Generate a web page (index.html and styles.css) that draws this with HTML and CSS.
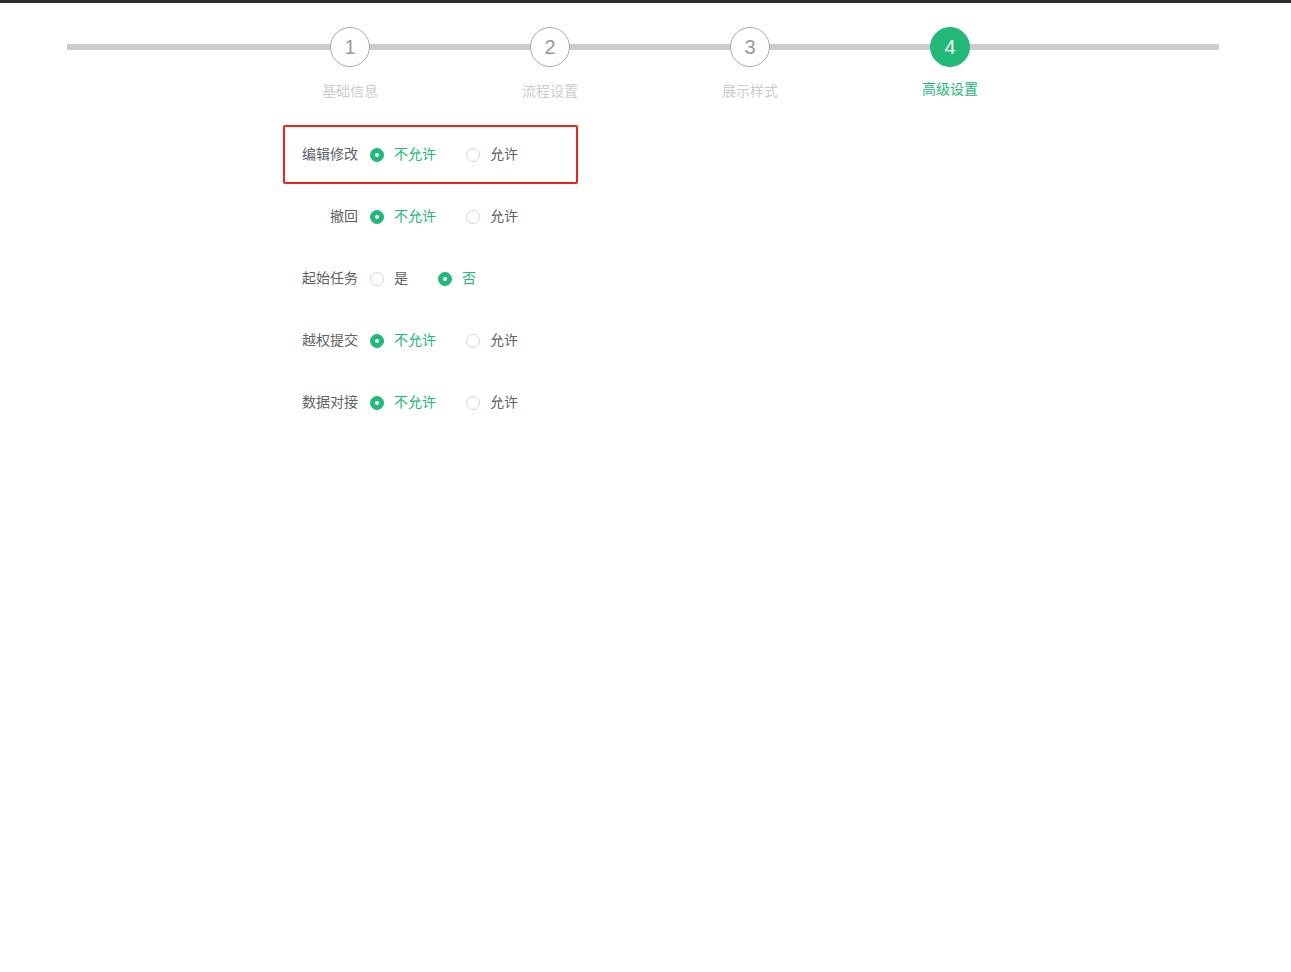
FILE: index.html
```html
<!DOCTYPE html>
<html lang="zh-CN">
<head>
    <meta charset="UTF-8">
    <title>高级设置</title>
    <link rel="stylesheet" href="styles.css">
</head>
<body>
    <div class="topbar"></div>

    <div class="steps">
        <div class="step">
            <div class="step-num">1</div>
            <div class="step-title">基础信息</div>
        </div>
        <div class="step">
            <div class="step-num">2</div>
            <div class="step-title">流程设置</div>
        </div>
        <div class="step">
            <div class="step-num">3</div>
            <div class="step-title">展示样式</div>
        </div>
        <div class="step active">
            <div class="step-num">4</div>
            <div class="step-title">高级设置</div>
        </div>
    </div>

    <form class="form">
        <div class="form-item marked">
            <label class="form-label">编辑修改</label>
            <div class="radios">
                <span class="radio checked"><i></i>不允许</span>
                <span class="radio"><i></i>允许</span>
            </div>
        </div>
        <div class="form-item">
            <label class="form-label">撤回</label>
            <div class="radios">
                <span class="radio checked"><i></i>不允许</span>
                <span class="radio"><i></i>允许</span>
            </div>
        </div>
        <div class="form-item">
            <label class="form-label">起始任务</label>
            <div class="radios">
                <span class="radio"><i></i>是</span>
                <span class="radio checked"><i></i>否</span>
            </div>
        </div>
        <div class="form-item">
            <label class="form-label">越权提交</label>
            <div class="radios">
                <span class="radio checked"><i></i>不允许</span>
                <span class="radio"><i></i>允许</span>
            </div>
        </div>
        <div class="form-item">
            <label class="form-label">数据对接</label>
            <div class="radios">
                <span class="radio checked"><i></i>不允许</span>
                <span class="radio"><i></i>允许</span>
            </div>
        </div>
    </form>
</body>
</html>
```

FILE: styles.css
```css
body {
    margin: 0;
    background-color: #fff;
    font-family: "Noto Sans CJK SC", "Liberation Sans", sans-serif;
    font-size: 14px;
    color: #606266;
}

.topbar {
    height: 3px;
    background-color: #2f2f2f;
}

/* 步骤条 */
.steps {
    position: relative;
    display: flex;
    margin: 24px 72px 0 67px;
    padding-left: 183px;
}

.steps::before {
    content: "";
    position: absolute;
    left: 0;
    right: 0;
    top: 17px;
    height: 6px;
    background-color: #cccccc;
}

.step {
    position: relative;
    width: 200px;
    display: flex;
    flex-direction: column;
    align-items: center;
}

.step-num {
    width: 38px;
    height: 38px;
    border: 1px solid #aaaaaa;
    border-radius: 50%;
    background-color: #fff;
    color: #999;
    font-family: "Liberation Sans", Arial, sans-serif;
    font-size: 20px;
    line-height: 38px;
    text-align: center;
}

.step-title {
    margin-top: 13px;
    line-height: 20px;
    color: #cccccc;
}

.step.active .step-num {
    border-color: #22b877;
    background-color: #22b877;
    color: #fff;
}

.step.active .step-title {
    margin-top: 11px;
    margin-bottom: 2px;
    color: #22b877;
}

/* 表单 */
.form {
    margin: 25px 0 0 283px;
}

.form-item {
    box-sizing: border-box;
    display: flex;
    align-items: center;
    width: 295px;
    height: 59px;
    margin-bottom: 3px;
    padding: 7px 15px;
    border: 2px solid transparent;
    border-radius: 2px;
}

.form-item.marked {
    border-color: #f0221b;
}

.form-label {
    box-sizing: border-box;
    width: 70px;
    padding: 0 12px 3px 0;
    text-align: right;
    line-height: 37px;
}

.radios {
    display: flex;
    align-items: center;
}

.radio {
    display: flex;
    align-items: center;
    margin-right: 30px;
    padding-bottom: 3px;
    line-height: 37px;
}

.radio i {
    box-sizing: border-box;
    width: 14px;
    height: 14px;
    margin: 3px 10px 0 0;
    border: 1px solid #d4d6dc;
    border-radius: 50%;
    background-color: #fff;
}

.radio.checked {
    color: #22b877;
}

.radio.checked i {
    position: relative;
    border-color: #22b877;
    background-color: #22b877;
}

.radio.checked i::after {
    content: "";
    position: absolute;
    left: 4px;
    top: 4px;
    width: 4px;
    height: 4px;
    border-radius: 50%;
    background-color: #fff;
}
```
